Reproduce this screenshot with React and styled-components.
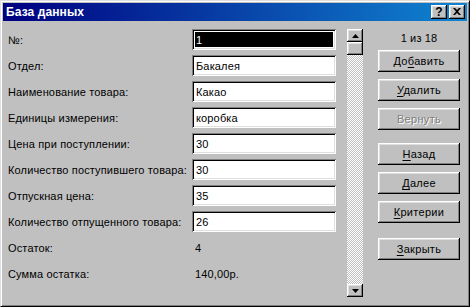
import React from "react";
import styled, { createGlobalStyle, css } from "styled-components";

const Global = createGlobalStyle`
  html, body { margin: 0; padding: 0; background: #c0c0c0; }
  * { box-sizing: border-box; }
`;

const raised = css`
  box-shadow: inset -1px -1px #000, inset 1px 1px #fff, inset -2px -2px #808080, inset 2px 2px #dfdfdf;
`;

const Window = styled.div`
  width: 470px;
  height: 307px;
  background: #c0c0c0;
  border: 1px solid;
  border-color: #dfdfdf #000 #000 #dfdfdf;
  box-shadow: inset 1px 1px #fff, inset -1px -1px #808080;
  padding: 2px;
  display: flex;
  flex-direction: column;
  font-family: "Liberation Sans", Arial, sans-serif;
  font-size: 11px;
  letter-spacing: 0.15px;
  color: #000;
`;

const TitleBar = styled.div`
  height: 18px;
  background: linear-gradient(90deg, #000080 0%, #1084d0 100%);
  display: flex;
  align-items: center;
  padding: 0 2px 0 2px;
`;

const Title = styled.div`
  flex: 1;
  color: #fff;
  font-weight: bold;
  font-size: 12px;
  letter-spacing: 0.1px;
  padding-left: 1px;
`;

const TitleButton = styled.div`
  width: 16px;
  height: 14px;
  background: #c0c0c0;
  ${raised};
  display: flex;
  align-items: center;
  justify-content: center;
  font-weight: bold;
  font-size: 12px;
  margin-left: ${(p) => (p.$gap ? "2px" : "0")};
  padding-bottom: 1px;
`;

const Body = styled.div`
  flex: 1;
  display: flex;
  padding: 8px 0 7px 5px;
`;

const Form = styled.div`
  display: grid;
  grid-template-columns: 184px 144px;
  grid-auto-rows: 21px;
  row-gap: 5px;
  align-content: start;
`;

const Label = styled.div`
  display: flex;
  align-items: center;
  white-space: nowrap;
`;

const Field = styled.div`
  background: #fff;
  box-shadow: inset 1px 1px #808080, inset -1px -1px #fff, inset 2px 2px #000, inset -2px -2px #dfdfdf;
  padding: 3px 3px 3px 3px;
  display: flex;
`;

const FieldText = styled.div`
  flex: 1;
  display: flex;
  align-items: center;
  padding-left: 1px;
  background: ${(p) => (p.$selected ? "#000" : "transparent")};
  color: ${(p) => (p.$selected ? "#fff" : "#000")};
`;

const Plain = styled.div`
  display: flex;
  align-items: center;
  padding-left: 3px;
`;

const ScrollBar = styled.div`
  width: 16px;
  margin-left: 11px;
  display: flex;
  flex-direction: column;
`;

const ScrollButton = styled.div`
  height: 13px;
  background: #c0c0c0;
  ${raised};
  display: flex;
  align-items: center;
  justify-content: center;
`;

const Track = styled.div`
  flex: 1;
  background-color: #fff;
  background-image: repeating-conic-gradient(#c0c0c0 0 25%, #fff 0 50%);
  background-size: 2px 2px;
`;

const Side = styled.div`
  width: 82px;
  margin-left: 15px;
  display: flex;
  flex-direction: column;
`;

const Counter = styled.div`
  height: 21px;
  display: flex;
  align-items: center;
  justify-content: center;
  padding-bottom: 4px;
`;

const Button = styled.div`
  height: 22px;
  background: #c0c0c0;
  ${raised};
  display: flex;
  align-items: center;
  justify-content: center;
  margin-top: ${(p) => p.$top}px;
  color: ${(p) => (p.$disabled ? "#808080" : "#000")};
  text-shadow: ${(p) => (p.$disabled ? "1px 1px #fff" : "none")};
  letter-spacing: 0.3px;
  u { text-decoration: underline; text-underline-offset: 2px; }
`;

const Arrow = ({ down }) => (
  <svg width="7" height="4" viewBox="0 0 7 4">
    {down ? <path d="M0 0h7L3.5 4z" fill="#000" /> : <path d="M0 4h7L3.5 0z" fill="#000" />}
  </svg>
);

const rows = [
  ["№:", "1", true],
  ["Отдел:", "Бакалея"],
  ["Наименование товара:", "Какао"],
  ["Единицы измерения:", "коробка"],
  ["Цена при поступлении:", "30"],
  ["Количество поступившего товара:", "30"],
  ["Отпускная цена:", "35"],
  ["Количество отпущенного товара:", "26"],
];

const buttons = [
  { pre: "До", u: "б", post: "авить", top: 0 },
  { pre: "", u: "У", post: "далить", top: 7 },
  { pre: "Вернуть", u: "", post: "", top: 7, disabled: true },
  { pre: "", u: "Н", post: "азад", top: 13 },
  { pre: "", u: "Д", post: "алее", top: 7 },
  { pre: "", u: "К", post: "ритерии", top: 7 },
  { pre: "", u: "З", post: "акрыть", top: 15 },
];

export default function App() {
  return (
    <>
      <Global />
      <Window>
        <TitleBar>
          <Title>База данных</Title>
          <TitleButton>?</TitleButton>
          <TitleButton $gap>
            <svg width="8" height="7" viewBox="0 0 8 7">
              <path d="M0 0h2l2 2 2-2h2L5 3.5 8 7H6L4 5 2 7H0l3-3.5z" fill="#000" />
            </svg>
          </TitleButton>
        </TitleBar>
        <Body>
          <Form>
            {rows.map(([label, value, sel]) => (
              <React.Fragment key={label}>
                <Label>{label}</Label>
                <Field>
                  <FieldText $selected={sel}>{value}</FieldText>
                </Field>
              </React.Fragment>
            ))}
            <Label>Остаток:</Label>
            <Plain>4</Plain>
            <Label>Сумма остатка:</Label>
            <Plain>140,00р.</Plain>
          </Form>
          <ScrollBar>
            <ScrollButton>
              <Arrow />
            </ScrollButton>
            <ScrollButton />
            <Track />
            <ScrollButton>
              <Arrow down />
            </ScrollButton>
          </ScrollBar>
          <Side>
            <Counter>1 из 18</Counter>
            {buttons.map((b, i) => (
              <Button key={i} $top={b.top} $disabled={b.disabled}>
                <span>
                  {b.pre}
                  {b.u && <u>{b.u}</u>}
                  {b.post}
                </span>
              </Button>
            ))}
          </Side>
        </Body>
      </Window>
    </>
  );
}
